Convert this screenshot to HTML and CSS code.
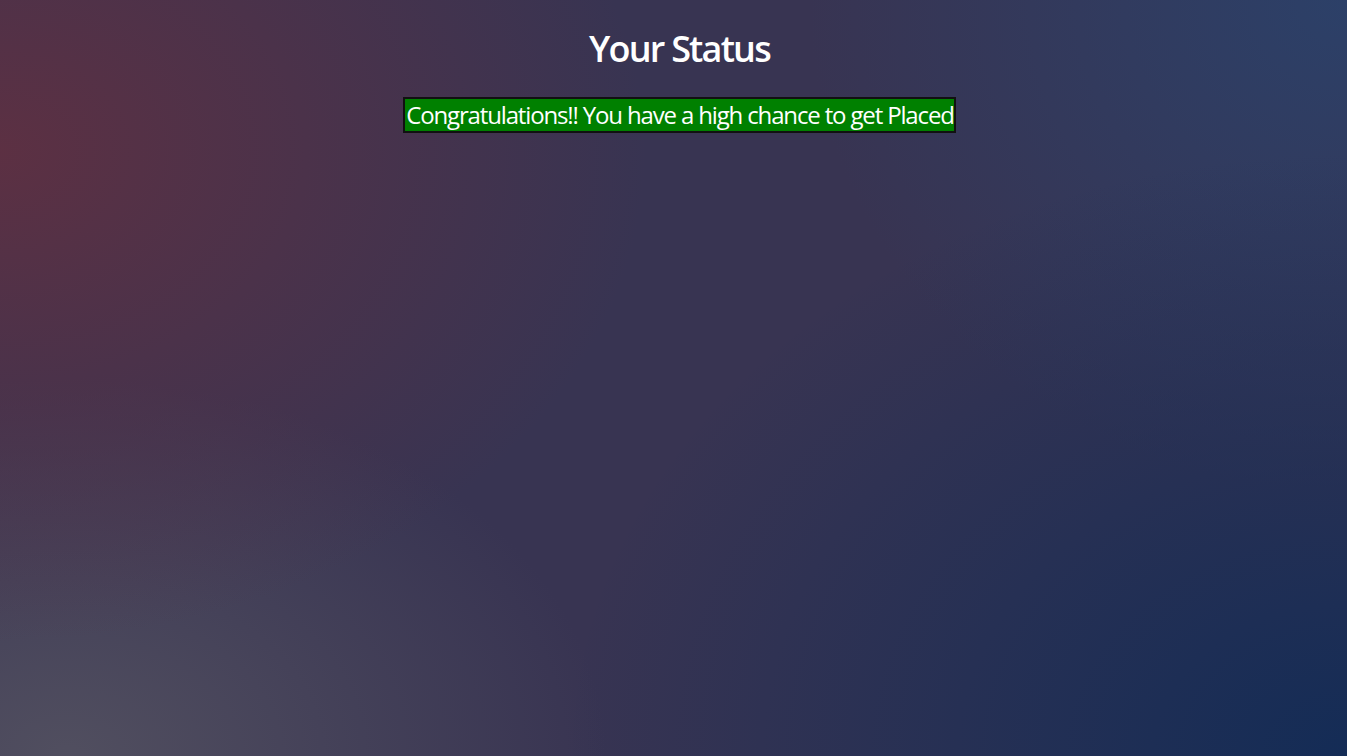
FILE: index.html
```html
<!DOCTYPE html>
<html>
<head>
<meta charset="utf-8">
<link rel="stylesheet" href="styles.css">
</head>
<body>
<main class="page">
  <h1 class="title">Your Status</h1>
  <div class="status">Congratulations!! You have a high chance to get Placed</div>
</main>
</body>
</html>
```
FILE: styles.css
```css
html, body {
  margin: 0;
  height: 100%;
}
body {
  font-family: "Open Sans", "Noto Sans", sans-serif;
  color: #fff;
  background-color: #383452;
  background-image:
    radial-gradient(ellipse 48% 65% at 0% 20%, rgba(94, 48, 66, 0.95), rgba(94, 48, 66, 0) 100%),
    radial-gradient(ellipse 40% 50% at 5% 100%, rgba(82, 80, 96, 0.95), rgba(82, 80, 96, 0) 100%),
    radial-gradient(ellipse 58% 80% at 100% 100%, rgba(20, 44, 86, 1), rgba(20, 44, 86, 0) 100%),
    radial-gradient(ellipse 40% 65% at 100% 0%, rgba(44, 64, 104, 1), rgba(44, 64, 104, 0) 100%);
}
.page {
  display: flex;
  flex-direction: column;
  align-items: center;
  padding-top: 24px;
  padding-left: 12px;
}
.title {
  margin: 0;
  font-size: 36px;
  font-weight: 600;
  line-height: 50px;
  letter-spacing: -1.8px;
}
.status {
  margin-top: 23px;
  background: #008000;
  border: 2px solid #111;
  font-size: 24px;
  line-height: 32px;
  padding: 0 0 0 1px;
  letter-spacing: -1.15px;
}
```
